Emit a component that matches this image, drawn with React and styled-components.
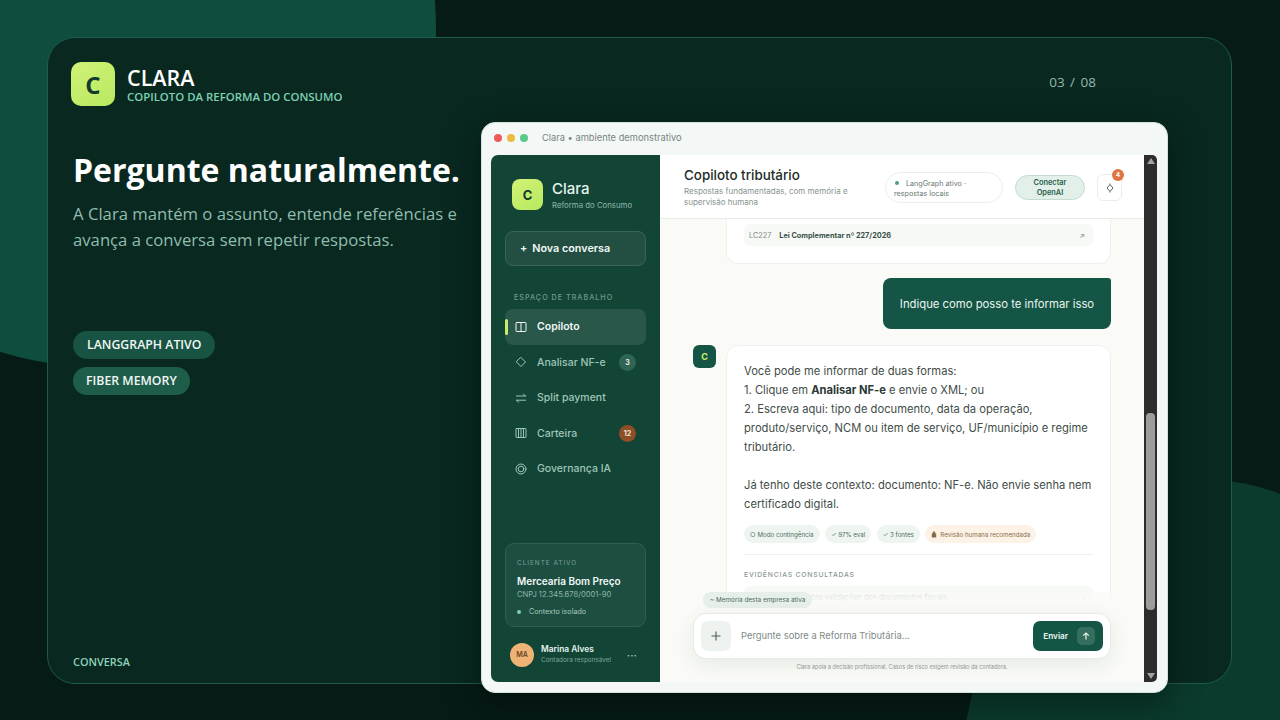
import React from 'react';
import styled, { createGlobalStyle } from 'styled-components';

const GlobalStyle = createGlobalStyle`
  html, body {
    margin: 0;
    padding: 0;
    background: #061b16;
  }
  * {
    box-sizing: border-box;
  }
`;

const uiFont = `'Inter', 'Liberation Sans', sans-serif`;
const slideFont = `'Open Sans', 'Noto Sans', sans-serif`;

// Slide background
const Page = styled.div`
  position: relative;
  width: 1280px;
  height: 720px;
  padding: 37px 48px 36px 47px;
  background: #061b16;
  overflow: hidden;
  font-family: ${slideFont};
`;

const BlobTop = styled.div`
  position: absolute;
  left: -236px;
  top: -310px;
  width: 672px;
  height: 677px;
  border-radius: 50%;
  background: #0f4e3f;
`;

const BlobBottom = styled.div`
  position: absolute;
  left: 960px;
  top: 480px;
  width: 494px;
  height: 622px;
  border-radius: 50%;
  background: #0b3a2e;
`;

const Slide = styled.section`
  position: relative;
  display: flex;
  flex-direction: column;
  height: 647px;
  background: #082820;
  border: 1px solid #1d5c4a;
  border-radius: 28px;
`;

const SlideTop = styled.header`
  display: flex;
  flex: none;
  justify-content: space-between;
  align-items: flex-start;
  height: 84px;
  padding: 24px 135px 0 23px;
`;

const Brand = styled.div`
  display: flex;
  align-items: center;
  gap: 12px;
`;

const BrandMark = styled.div`
  display: flex;
  align-items: center;
  justify-content: center;
  width: 44px;
  height: 44px;
  border-radius: 10px;
  background: linear-gradient(145deg, #d0f277, #b8e95f);
  color: #14392d;
  font-size: 24px;
  font-weight: 700;
`;

const BrandText = styled.div`
  padding-top: 2px;
`;

const BrandName = styled.div`
  color: #ffffff;
  font-size: 21.5px;
  font-weight: 600;
  line-height: 24px;
`;

const BrandSub = styled.div`
  color: #7fd0b3;
  font-size: 11.4px;
  font-weight: 600;
  line-height: 14px;
`;

const PageCount = styled.div`
  margin-top: 11px;
  color: #93b8ac;
  font-size: 13.5px;
  word-spacing: 2px;
`;

const SlideBody = styled.div`
  display: flex;
  flex: none;
  height: 571px;
`;

const Intro = styled.div`
  display: flex;
  flex-direction: column;
  width: 433px;
  padding: 25px 0 0 25px;
`;

const Headline = styled.h1`
  margin: 0;
  color: #ffffff;
  font-size: 32px;
  font-weight: 700;
  line-height: 46px;
  white-space: nowrap;
`;

const Lead = styled.p`
  margin: 8px 0 0;
  color: #91bcae;
  font-size: 16.7px;
  line-height: 26px;
  white-space: nowrap;
`;

const Tags = styled.div`
  display: flex;
  flex-direction: column;
  align-items: flex-start;
  gap: 8px;
  margin-top: 78px;
`;

const Tag = styled.span`
  padding: 0 ${(p) => (p.$light ? 13 : 14)}px;
  border-radius: 15px;
  background: ${(p) => (p.$light ? '#1f5d4b' : '#185343')};
  color: #f0f8f4;
  font-size: 12.3px;
  font-weight: 600;
  line-height: 28px;
`;

const SectionName = styled.div`
  margin-top: auto;
  margin-bottom: 24px;
  color: #8fd2b9;
  font-size: 10.9px;
  font-weight: 600;
`;

// App window
const Window = styled.div`
  display: flex;
  flex-direction: column;
  width: 687px;
  height: 571px;
  padding: 0 10px 10px 9px;
  background: #f3f8f6;
  border: 1px solid #cfe3da;
  border-radius: 14px;
  box-shadow: 0 10px 34px rgba(0, 0, 0, 0.4);
`;

const TitleBar = styled.div`
  display: flex;
  align-items: center;
  flex: 0 0 32px;
  padding: 0 0 3px 3px;
  gap: 5px;
`;

const Light = styled.span`
  width: 8px;
  height: 8px;
  margin-right: ${(p) => p.$gap || 0}px;
  border-radius: 50%;
  background: ${(p) => p.$color};
`;

const TitleText = styled.span`
  color: #77857f;
  font-family: ${uiFont};
  font-size: 9.3px;
`;

const AppFrame = styled.div`
  display: flex;
  flex: 1;
  min-height: 0;
  font-family: ${uiFont};
`;

const Sidebar = styled.aside`
  display: flex;
  flex-direction: column;
  flex: 0 0 169px;
  min-width: 0;
  padding: 24px 14px 0;
  background: #134537;
  border-radius: 7px 0 0 7px;
`;

const SideBrand = styled.div`
  display: flex;
  align-items: center;
  gap: 9px;
  padding-left: 7px;
`;

const SideMark = styled.div`
  display: flex;
  align-items: center;
  justify-content: center;
  width: 31px;
  height: 31px;
  border-radius: 8px;
  background: linear-gradient(145deg, #d0f277, #b8e95f);
  color: #14392d;
  font-size: 13px;
  font-weight: 700;
`;

const SideName = styled.div`
  color: #e6f4ee;
  font-size: 15px;
  font-weight: 500;
  line-height: 18px;
`;

const SideSub = styled.div`
  margin-top: 2px;
  color: #8db5a7;
  font-size: 7.8px;
  line-height: 10px;
  white-space: nowrap;
`;

const NewChat = styled.button`
  display: flex;
  align-items: center;
  gap: 5px;
  height: 35px;
  margin-top: 21px;
  padding: 0 14px;
  background: #234f43;
  border: 1px solid #38655a;
  border-radius: 8px;
  color: #f0f8f4;
  font-family: inherit;
  font-size: 10.8px;
  font-weight: 600;
  white-space: nowrap;
`;

const SideLabel = styled.div`
  margin: 27px 0 6px 9px;
  color: #6f9b8c;
  font-size: 7.2px;
  font-weight: 500;
  letter-spacing: 1px;
  line-height: 10px;
`;

const Nav = styled.nav`
  display: flex;
  flex-direction: column;
`;

const NavItem = styled.div`
  position: relative;
  display: flex;
  align-items: center;
  gap: 10px;
  height: 35.5px;
  padding: 0 10px;
  border-radius: 8px;
  background: ${(p) => (p.$active ? '#29574a' : 'transparent')};
  color: ${(p) => (p.$active ? '#f0f8f4' : '#9fc6b8')};
  font-size: 10.5px;
  font-weight: ${(p) => (p.$active ? 600 : 500)};
  white-space: nowrap;

  &::before {
    content: '';
    display: ${(p) => (p.$active ? 'block' : 'none')};
    position: absolute;
    left: 0;
    top: 10px;
    width: 3px;
    height: 16px;
    border-radius: 2px;
    background: #c5ec6c;
  }

  svg {
    flex: none;
  }
`;

const Count = styled.span`
  display: flex;
  align-items: center;
  justify-content: center;
  width: 17px;
  height: 17px;
  margin-left: auto;
  border-radius: 50%;
  background: ${(p) => (p.$warn ? '#8e4f27' : '#2f6557')};
  color: #f3e8d8;
  font-size: 7px;
  font-weight: 700;
`;

const ClientCard = styled.div`
  height: 84px;
  margin-top: auto;
  padding: 15px 11px 0;
  background: #1d4e42;
  border: 1px solid #2d5f52;
  border-radius: 9px;
`;

const ClientLabel = styled.div`
  color: #78a294;
  font-size: 6.4px;
  letter-spacing: 1px;
  line-height: 9px;
`;

const ClientName = styled.div`
  margin-top: 6px;
  color: #f0f8f4;
  font-size: 10px;
  font-weight: 600;
  line-height: 14px;
  white-space: nowrap;
`;

const ClientId = styled.div`
  margin-top: 1px;
  color: #8db5a7;
  font-size: 7.6px;
  line-height: 11px;
`;

const ClientScope = styled.div`
  display: flex;
  align-items: center;
  gap: 8px;
  margin-top: 7px;
  color: #a5cabd;
  font-size: 7.2px;
  line-height: 10px;

  &::before {
    content: '';
    width: 4px;
    height: 4px;
    border-radius: 50%;
    background: #7ed0ae;
  }
`;

const UserRow = styled.div`
  display: flex;
  align-items: center;
  gap: 7px;
  height: 55px;
  padding: 0 9px 0 5px;
`;

const Avatar = styled.div`
  display: flex;
  align-items: center;
  justify-content: center;
  flex: none;
  width: 24px;
  height: 24px;
  border-radius: 50%;
  background: #efb376;
  color: #6a4526;
  font-size: 7px;
  font-weight: 600;
`;

const UserInfo = styled.div`
  flex: 1;
  min-width: 0;
  white-space: nowrap;
`;

const UserName = styled.div`
  color: #e6f4ee;
  font-size: 8.4px;
  font-weight: 600;
  line-height: 11px;
`;

const UserRole = styled.div`
  color: #7ca698;
  font-size: 6.4px;
  line-height: 10px;
`;

const Dots = styled.span`
  color: #a5cabd;
  font-size: 5px;
  letter-spacing: 0.5px;
`;

// Main column
const Main = styled.main`
  position: relative;
  display: flex;
  flex-direction: column;
  flex: 1;
  min-width: 0;
  background: #fafbf7;
`;

const TopBar = styled.header`
  position: relative;
  display: flex;
  align-items: center;
  flex: 0 0 64px;
  padding: 2px 22px 0 24px;
  background: #ffffff;
  border-bottom: 1px solid #e6ece8;
`;

const TopInfo = styled.div`
  flex: 1;
`;

const TopTitle = styled.div`
  color: #1c2b26;
  font-size: 13.4px;
  font-weight: 500;
  line-height: 16px;
`;

const TopSub = styled.div`
  width: 180px;
  margin-top: 3px;
  color: #87938e;
  font-size: 8px;
  line-height: 11px;
`;

const StatusPill = styled.div`
  width: 118px;
  height: 31px;
  padding: 6px 8px 0;
  background: #ffffff;
  border: 1px solid #e8eeea;
  border-radius: 16px;
  color: #69776f;
  font-size: 7.2px;
  line-height: 9.5px;
`;

const StatusDot = styled.span`
  display: inline-block;
  width: 4px;
  height: 4px;
  margin: 0 7px 1px 1px;
  border-radius: 50%;
  background: #4f9f80;
`;

const ConnectButton = styled.button`
  width: 70px;
  height: 25px;
  margin-left: 12px;
  padding: 0;
  background: #e2f0e9;
  border: 1px solid #c3dccf;
  border-radius: 13px;
  color: #2c5f4e;
  font-family: inherit;
  font-size: 7.4px;
  font-weight: 600;
  line-height: 9.5px;
`;

const BellButton = styled.div`
  position: relative;
  display: flex;
  align-items: center;
  justify-content: center;
  width: 25px;
  height: 27px;
  margin-left: 12px;
  background: #ffffff;
  border: 1px solid #e8eeea;
  border-radius: 6px;
`;

const BellBadge = styled.span`
  position: absolute;
  top: -6px;
  right: -3px;
  display: flex;
  align-items: center;
  justify-content: center;
  width: 12px;
  height: 12px;
  border-radius: 50%;
  background: #dd7544;
  color: #ffffff;
  font-size: 6.5px;
  font-weight: 700;
`;

const Messages = styled.div`
  display: flex;
  flex-direction: column;
  flex: 1;
  min-height: 0;
  overflow: hidden;
  padding: 0 33px 0 33px;
`;

const RefCard = styled.div`
  flex: none;
  height: 45px;
  margin: 0 0 14px 33px;
  padding: 5px 17px 0;
  background: #ffffff;
  border: 1px solid #eef1ec;
  border-top: none;
  border-radius: 0 0 12px 12px;
`;

const RefRow = styled.div`
  display: flex;
  align-items: center;
  height: 22px;
  padding: 0 8px 0 5px;
  background: #f6f9f5;
  border-radius: 5px;
  font-size: 7.3px;
  color: #7f8c86;
`;

const RefTitle = styled.span`
  flex: 1;
  margin-left: 8px;
  color: #38524a;
  font-weight: 700;
`;

const UserBubble = styled.div`
  flex: none;
  align-self: flex-end;
  width: 228px;
  height: 51px;
  margin-bottom: 16px;
  background: #155545;
  border-radius: 8px 3px 8px 8px;
  color: #e9f5ef;
  font-size: 11.3px;
  line-height: 52px;
  text-align: center;
  white-space: nowrap;
`;

const AssistantRow = styled.div`
  display: flex;
  flex: none;
  gap: 10px;
`;

const BotMark = styled.div`
  display: flex;
  align-items: center;
  justify-content: center;
  flex: none;
  width: 23px;
  height: 23px;
  border-radius: 6px;
  background: #155545;
  color: #c9ef6a;
  font-size: 9px;
  font-weight: 700;
`;

const AnswerCard = styled.article`
  flex: 1;
  height: 290px;
  padding: 16px 17px 0;
  background: #ffffff;
  border: 1px solid #eef1ec;
  border-radius: 12px;
`;

const AnswerText = styled.p`
  margin: 0;
  color: #3f4d48;
  font-size: 11.2px;
  line-height: 19px;
  white-space: nowrap;

  b {
    font-weight: 700;
    color: #2b3a35;
  }
`;

const Chips = styled.div`
  display: flex;
  gap: 5.5px;
  margin-top: 11px;
  padding-bottom: 11px;
  border-bottom: 1px solid #edf0ec;
`;

const Chip = styled.span`
  display: inline-flex;
  align-items: center;
  gap: 3px;
  height: 18px;
  padding: 0 6px;
  border-radius: 9px;
  background: ${(p) => (p.$warn ? '#fcf2e6' : '#eef5f0')};
  color: ${(p) => (p.$warn ? '#8a6a48' : '#4c6b5e')};
  font-size: 6.2px;
  white-space: nowrap;
`;

const EvidenceLabel = styled.div`
  margin-top: 15px;
  color: #8a9792;
  font-size: 6.8px;
  font-weight: 500;
  letter-spacing: 0.8px;
  line-height: 9px;
`;

const EvidenceRow = styled.div`
  display: flex;
  justify-content: space-between;
  height: 22px;
  margin-top: 7px;
  padding: 7px 8px 0;
  background: #f6f9f5;
  border-radius: 5px;
  color: #6c7a74;
  font-size: 7.4px;
  white-space: nowrap;
  overflow: hidden;
`;

const Dock = styled.div`
  position: absolute;
  left: 0;
  right: 0;
  bottom: 0;
  display: flex;
  flex-direction: column;
  height: 90px;
  padding: 0 33px;
  background: linear-gradient(rgba(250, 251, 247, 0.7), #fafbf7 12%);
`;

const MemoryChip = styled.span`
  align-self: flex-start;
  height: 16px;
  margin-left: 10px;
  padding: 0 7px;
  border-radius: 8px;
  background: #e6efe9;
  color: #4c6b5e;
  font-size: 6.4px;
  line-height: 16px;
  white-space: nowrap;
`;

const Composer = styled.div`
  display: flex;
  align-items: center;
  flex: none;
  height: 46px;
  margin-top: 5px;
  padding: 0 7px;
  background: #ffffff;
  border: 1px solid #e6ece8;
  border-radius: 13px;
  box-shadow: 0 6px 20px rgba(20, 60, 48, 0.09);
`;

const PlusButton = styled.div`
  display: flex;
  align-items: center;
  justify-content: center;
  width: 30px;
  height: 30px;
  border-radius: 7px;
  background: #eef2ef;
  color: #4c5d56;
`;

const ComposerHint = styled.span`
  flex: 1;
  margin-left: 10px;
  padding-bottom: 2px;
  color: #7e8a85;
  font-size: 9.4px;
`;

const SendButton = styled.button`
  display: flex;
  align-items: center;
  justify-content: flex-end;
  gap: 9px;
  width: 70px;
  height: 30px;
  padding: 0 8px 0 0;
  background: #155545;
  border: none;
  border-radius: 7px;
  color: #eef8f3;
  font-family: inherit;
  font-size: 8.2px;
  font-weight: 600;
`;

const SendArrow = styled.span`
  display: flex;
  align-items: center;
  justify-content: center;
  width: 18px;
  height: 18px;
  border-radius: 5px;
  background: #346e5d;
`;

const Disclaimer = styled.div`
  margin-top: 4px;
  color: #8f9a95;
  font-size: 5.6px;
  line-height: 9px;
  text-align: center;
`;

const Scrollbar = styled.div`
  position: relative;
  display: flex;
  flex-direction: column;
  align-items: center;
  justify-content: space-between;
  flex: 0 0 13px;
  padding: 3px 0;
  background: #2e2d2b;
  border-radius: 0 5px 5px 0;
`;

const ScrollThumb = styled.div`
  position: absolute;
  top: 258px;
  left: 2px;
  width: 9px;
  height: 197px;
  border-radius: 4px;
  background: #9d9d9b;
`;

const ScrollArrow = styled.span`
  width: 0;
  height: 0;
  border-left: 4.5px solid transparent;
  border-right: 4.5px solid transparent;
  ${(p) => (p.$down ? 'border-top: 6px solid #a3a3a1;' : 'border-bottom: 6px solid #a3a3a1;')}
`;

// Icons
const Icon = ({ children, size = 12 }) => (
  <svg width={size} height={size} viewBox="0 0 12 12" fill="none" stroke="currentColor" strokeWidth="1" strokeLinecap="round" strokeLinejoin="round">
    {children}
  </svg>
);

const navItems = [
  {
    label: 'Copiloto',
    active: true,
    icon: (
      <>
        <rect x="1" y="1.5" width="10" height="9" rx="0.8" />
        <path d="M6 1.5v9" />
      </>
    ),
  },
  {
    label: 'Analisar NF-e',
    count: '3',
    icon: <path d="M6 1.5 10.5 6 6 10.5 1.5 6Z" />,
  },
  {
    label: 'Split payment',
    icon: <path d="M1.5 4h9M8.5 2l2 2M10.5 8.2h-9M3.5 10.2l-2-2" />,
  },
  {
    label: 'Carteira',
    count: '12',
    warn: true,
    icon: (
      <>
        <rect x="1" y="1.5" width="10" height="9" rx="0.5" />
        <path d="M3.5 1.5v9M6 1.5v9M8.5 1.5v9" />
      </>
    ),
  },
  {
    label: 'Governança IA',
    icon: (
      <>
        <circle cx="6" cy="6" r="5" />
        <circle cx="6" cy="6" r="2.8" />
      </>
    ),
  },
];

const chips = ['○ Modo contingência', '✓ 97% eval', '✓ 3 fontes'];

const App = () => {
  return (
    <Page>
      <GlobalStyle />
      <BlobTop />
      <BlobBottom />
      <Slide>
        <SlideTop>
          <Brand>
            <BrandMark>C</BrandMark>
            <BrandText>
              <BrandName>CLARA</BrandName>
              <BrandSub>COPILOTO DA REFORMA DO CONSUMO</BrandSub>
            </BrandText>
          </Brand>
          <PageCount>03 / 08</PageCount>
        </SlideTop>

        <SlideBody>
          <Intro>
            <Headline>Pergunte naturalmente.</Headline>
            <Lead>
              A Clara mantém o assunto, entende referências e
              <br />
              avança a conversa sem repetir respostas.
            </Lead>
            <Tags>
              <Tag>LANGGRAPH ATIVO</Tag>
              <Tag $light>FIBER MEMORY</Tag>
            </Tags>
            <SectionName>CONVERSA</SectionName>
          </Intro>

          <Window>
            <TitleBar>
              <Light $color="#ee5a5a" />
              <Light $color="#efb93f" />
              <Light $color="#5cc98c" $gap={9} />
              <TitleText>Clara • ambiente demonstrativo</TitleText>
            </TitleBar>

            <AppFrame>
              <Sidebar>
                <SideBrand>
                  <SideMark>C</SideMark>
                  <div>
                    <SideName>Clara</SideName>
                    <SideSub>Reforma do Consumo</SideSub>
                  </div>
                </SideBrand>

                <NewChat>+ <span>Nova conversa</span></NewChat>

                <SideLabel>ESPAÇO DE TRABALHO</SideLabel>
                <Nav>
                  {navItems.map((item) => (
                    <NavItem key={item.label} $active={item.active}>
                      <Icon>{item.icon}</Icon>
                      {item.label}
                      {item.count && <Count $warn={item.warn}>{item.count}</Count>}
                    </NavItem>
                  ))}
                </Nav>

                <ClientCard>
                  <ClientLabel>CLIENTE ATIVO</ClientLabel>
                  <ClientName>Mercearia Bom Preço</ClientName>
                  <ClientId>CNPJ 12.345.678/0001-90</ClientId>
                  <ClientScope>Contexto isolado</ClientScope>
                </ClientCard>

                <UserRow>
                  <Avatar>MA</Avatar>
                  <UserInfo>
                    <UserName>Marina Alves</UserName>
                    <UserRole>Contadora responsável</UserRole>
                  </UserInfo>
                  <Dots>•••</Dots>
                </UserRow>
              </Sidebar>

              <Main>
                <TopBar>
                  <TopInfo>
                    <TopTitle>Copiloto tributário</TopTitle>
                    <TopSub>Respostas fundamentadas, com memória e supervisão humana</TopSub>
                  </TopInfo>
                  <StatusPill><StatusDot />LangGraph ativo · respostas locais</StatusPill>
                  <ConnectButton>Conectar<br />OpenAI</ConnectButton>
                  <BellButton>
                    <svg width="8" height="10" viewBox="0 0 8 10" fill="none" stroke="#55655e" strokeWidth="1">
                      <path d="M4 .5v1M4 8.5v1" />
                      <path d="M4 1.5 7 5 4 8.5 1 5Z" />
                    </svg>
                    <BellBadge>4</BellBadge>
                  </BellButton>
                </TopBar>

                <Messages>
                  <RefCard>
                    <RefRow>
                      LC227
                      <RefTitle>Lei Complementar nº 227/2026</RefTitle>
                      <span>↗</span>
                    </RefRow>
                  </RefCard>

                  <UserBubble>Indique como posso te informar isso</UserBubble>

                  <AssistantRow>
                    <BotMark>C</BotMark>
                    <AnswerCard>
                      <AnswerText>
                        Você pode me informar de duas formas:
                        <br />
                        1. Clique em <b>Analisar NF-e</b> e envie o XML; ou
                        <br />
                        2. Escreva aqui: tipo de documento, data da operação,
                        <br />
                        produto/serviço, NCM ou item de serviço, UF/município e regime
                        <br />
                        tributário.
                        <br />
                        <br />
                        Já tenho deste contexto: documento: NF-e. Não envie senha nem
                        <br />
                        certificado digital.
                      </AnswerText>
                      <Chips>
                        {chips.map((chip) => (
                          <Chip key={chip}>{chip}</Chip>
                        ))}
                        <Chip $warn>
                          <svg width="6" height="7" viewBox="0 0 6 7" fill="#8a6a48">
                            <path d="M1.7 2.4V1.8a1.3 1.3 0 0 1 2.6 0v.6H5.2V6.6H.8V2.4Z" />
                          </svg>
                          Revisão humana recomendada
                        </Chip>
                      </Chips>
                      <EvidenceLabel>EVIDÊNCIAS CONSULTADAS</EvidenceLabel>
                      <EvidenceRow>
                        <span>Procedimento sobre validações dos documentos fiscais</span>
                        <span>›</span>
                      </EvidenceRow>
                    </AnswerCard>
                  </AssistantRow>
                </Messages>

                <Dock>
                  <MemoryChip>~ Memória desta empresa ativa</MemoryChip>
                  <Composer>
                    <PlusButton>
                      <svg width="10" height="10" viewBox="0 0 10 10" stroke="currentColor" strokeWidth="1.1">
                        <path d="M5 .5v9M.5 5h9" />
                      </svg>
                    </PlusButton>
                    <ComposerHint>Pergunte sobre a Reforma Tributária...</ComposerHint>
                    <SendButton>
                      Enviar
                      <SendArrow>
                        <svg width="8" height="8" viewBox="0 0 8 8" fill="none" stroke="#e4f4ec" strokeWidth="1.2">
                          <path d="M4 7.5V1M1.2 3.6 4 1l2.8 2.6" />
                        </svg>
                      </SendArrow>
                    </SendButton>
                  </Composer>
                  <Disclaimer>Clara apoia a decisão profissional. Casos de risco exigem revisão da contadora.</Disclaimer>
                </Dock>
              </Main>

              <Scrollbar>
                <ScrollArrow />
                <ScrollThumb />
                <ScrollArrow $down />
              </Scrollbar>
            </AppFrame>
          </Window>
        </SlideBody>
      </Slide>
    </Page>
  );
};

export default App;
